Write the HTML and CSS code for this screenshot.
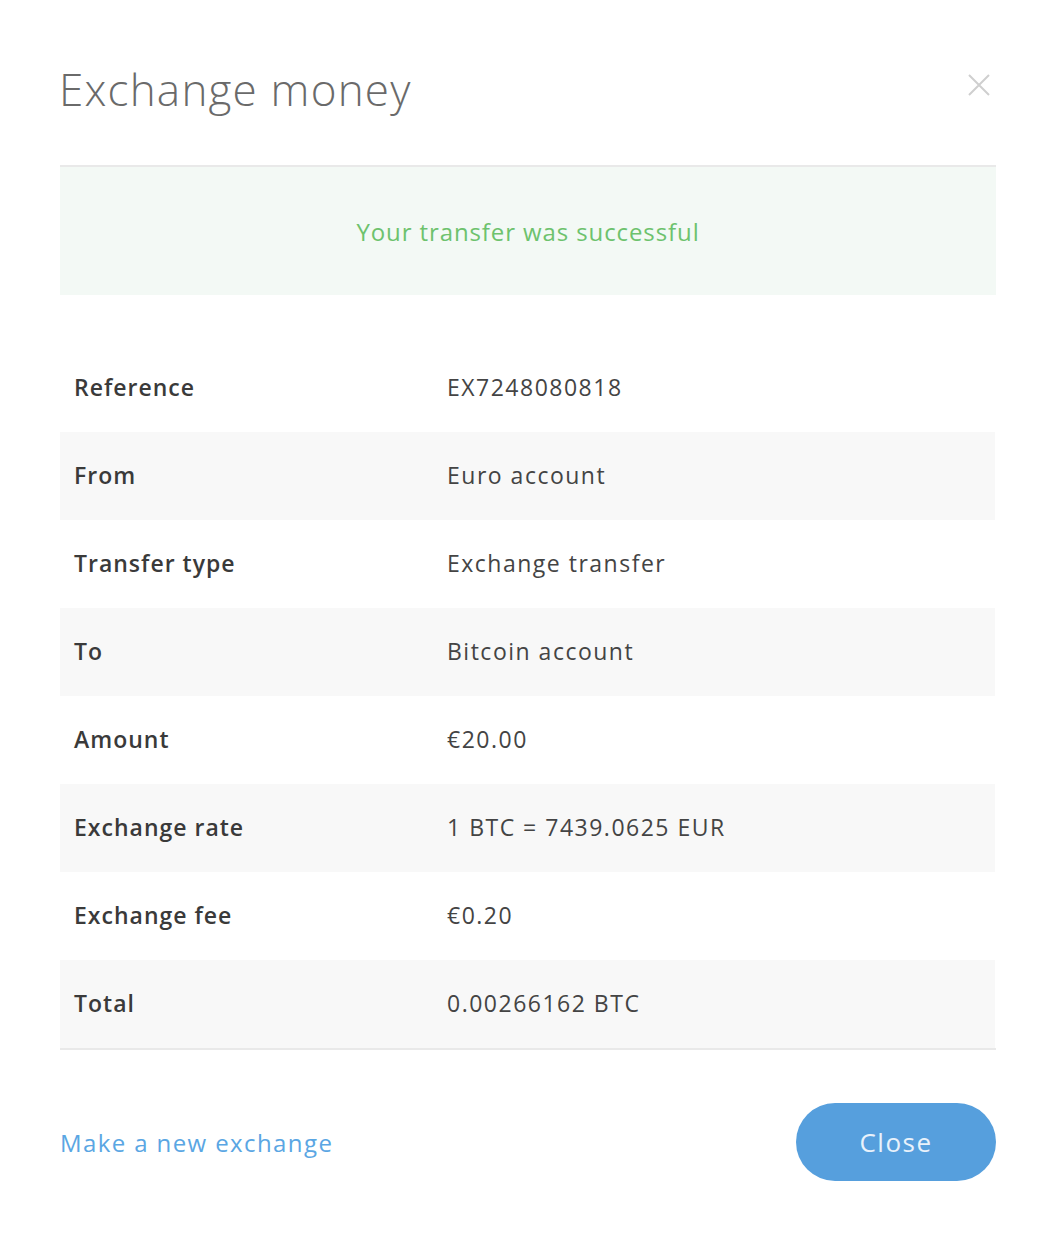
FILE: index.html
```html
<!DOCTYPE html>
<html lang="en">
<head>
<meta charset="utf-8">
<title>Exchange money</title>
<link rel="stylesheet" href="styles.css">
</head>
<body>
<div class="modal">
  <div class="header">
    <h1 class="title">Exchange money</h1>
    <button class="close-x" aria-label="Close">
      <svg width="22" height="22" viewBox="0 0 22 22"><path d="M1 1L21 21M21 1L1 21" stroke="#cfcfcf" stroke-width="2" fill="none"/></svg>
    </button>
  </div>
  <div class="success">Your transfer was successful</div>
  <div class="details">
    <div class="row"><div class="label">Reference</div><div class="value">EX7248080818</div></div>
    <div class="row alt"><div class="label">From</div><div class="value">Euro account</div></div>
    <div class="row"><div class="label">Transfer type</div><div class="value">Exchange transfer</div></div>
    <div class="row alt"><div class="label">To</div><div class="value">Bitcoin account</div></div>
    <div class="row"><div class="label">Amount</div><div class="value">€20.00</div></div>
    <div class="row alt"><div class="label">Exchange rate</div><div class="value">1 BTC = 7439.0625 EUR</div></div>
    <div class="row"><div class="label">Exchange fee</div><div class="value">€0.20</div></div>
    <div class="row alt"><div class="label">Total</div><div class="value">0.00266162 BTC</div></div>
  </div>
  <div class="footer">
    <a class="link" href="#">Make a new exchange</a>
    <button class="btn">Close</button>
  </div>
</div>
</body>
</html>
```
FILE: styles.css
```css
html, body {
  margin: 0;
  padding: 0;
  background: #ffffff;
}
body {
  font-family: "Open Sans", Lato, "Liberation Sans", sans-serif;
  color: #333;
}
.modal {
  width: 936px;
  padding: 0 64px 0 60px;
}
.header {
  height: 165px;
  display: flex;
  justify-content: space-between;
  align-items: flex-start;
  border-bottom: 2px solid #e9e9e9;
}
.title {
  margin: 61px 0 0 -1px;
  font-size: 44px;
  line-height: 56px;
  font-weight: 300;
  color: #6a6a6a;
  letter-spacing: 1.2px;
}
.close-x {
  margin: 74px 6px 0 0;
  padding: 0;
  border: 0;
  background: none;
  width: 22px;
  height: 22px;
  display: flex;
}
.success {
  height: 128px;
  background: #f3f9f5;
  color: #6dc26d;
  font-size: 24px;
  letter-spacing: 0.9px;
  display: flex;
  align-items: center;
  justify-content: center;
}
.details {
  margin-top: 49px;
  border-bottom: 2px solid #e9e9e9;
}
.row {
  height: 88px;
  display: grid;
  grid-template-columns: 387px 1fr;
  align-items: center;
  font-size: 23px;
  width: 935px;
  padding-bottom: 2px;
  box-sizing: border-box;
}
.row.alt {
  background: #f8f8f8;
}
.label {
  padding-left: 14px;
  font-weight: 600;
  color: #3a3a3a;
  letter-spacing: 1px;
}
.value {
  color: #444;
  letter-spacing: 1.5px;
}
.footer {
  margin-top: 53px;
  display: flex;
  justify-content: space-between;
  align-items: center;
}
.link {
  color: #5aa6e3;
  font-size: 24px;
  letter-spacing: 1.4px;
  text-decoration: none;
}
.btn {
  width: 200px;
  height: 78px;
  border: 0;
  border-radius: 39px;
  background: #569fdd;
  color: #e9f2fb;
  font-family: inherit;
  font-size: 26px;
  letter-spacing: 1.5px;
  padding: 0;
}
```
